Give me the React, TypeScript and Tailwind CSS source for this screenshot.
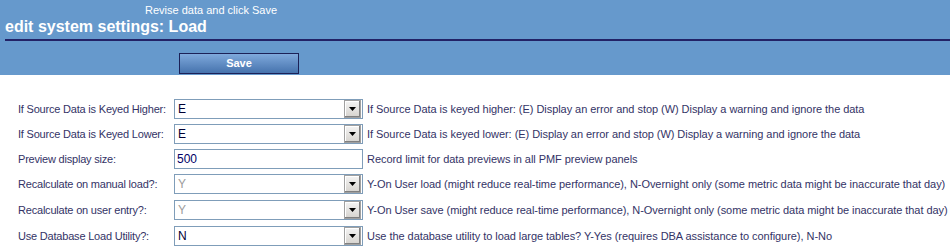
const rows = [
  {
    label: 'If Source Data is Keyed Higher:',
    kind: 'select',
    value: 'E',
    disabled: false,
    help: 'If Source Data is keyed higher: (E) Display an error and stop (W) Display a warning and ignore the data',
  },
  {
    label: 'If Source Data is Keyed Lower:',
    kind: 'select',
    value: 'E',
    disabled: false,
    help: 'If Source Data is keyed lower: (E) Display an error and stop (W) Display a warning and ignore the data',
  },
  {
    label: 'Preview display size:',
    kind: 'input',
    value: '500',
    disabled: false,
    help: 'Record limit for data previews in all PMF preview panels',
  },
  {
    label: 'Recalculate on manual load?:',
    kind: 'select',
    value: 'Y',
    disabled: true,
    help: 'Y-On User load (might reduce real-time performance), N-Overnight only (some metric data might be inaccurate that day)',
  },
  {
    label: 'Recalculate on user entry?:',
    kind: 'select',
    value: 'Y',
    disabled: true,
    help: 'Y-On User save (might reduce real-time performance), N-Overnight only (some metric data might be inaccurate that day)',
  },
  {
    label: 'Use Database Load Utility?:',
    kind: 'select',
    value: 'N',
    disabled: false,
    help: 'Use the database utility to load large tables? Y-Yes (requires DBA assistance to configure), N-No',
  },
];

function DropButton() {
  return (
    <div className="flex h-[18px] w-[17px] shrink-0 items-center justify-center border border-[#a0a0a0] bg-gradient-to-b from-[#f4f4f4] to-[#d6d3ce] shadow-[inset_-1px_-1px_0_#808080,inset_1px_1px_0_#ffffff]">
      <svg width="7" height="4" viewBox="0 0 7 4">
        <path d="M0 0H7L3.5 4Z" fill="#000" />
      </svg>
    </div>
  );
}

function Field({ kind, value, disabled }: { kind: string; value: string; disabled: boolean }) {
  if (kind === 'input') {
    return (
      <div className="flex h-[20px] w-[189px] shrink-0 items-center border border-[#7f9db9] bg-white pl-[2px] text-[12px] text-[#000066]">
        {value}
      </div>
    );
  }
  return (
    <div className="flex h-[20px] w-[189px] shrink-0 items-center justify-between border border-[#7f9db9] bg-white pl-[3px] pr-[1px]">
      <span className={disabled ? 'text-[12px] text-[#9c9c9c]' : 'text-[12px] text-[#000033]'}>{value}</span>
      <DropButton />
    </div>
  );
}

export default function App() {
  return (
    <div className="h-[248px] w-[950px] overflow-hidden bg-white font-['Liberation_Sans',Arial,sans-serif]">
      <div className="h-[75px] bg-[#6699cc]">
        <div className="pl-[145px] pt-[3px] text-[11px] leading-[14px] text-white">Revise data and click Save</div>
        <div className="ml-[5px] border-b-2 border-[#222266] pb-[2px] text-[16px] font-bold leading-[20px] text-white">
          edit system settings: Load
        </div>
        <div className="pl-[179px] pt-[9px]">
          <button className="h-[21px] w-[120px] border border-[#1c2157] bg-gradient-to-b from-[#7fa9dc] to-[#4673ad] text-[11px] font-bold text-white">
            Save
          </button>
        </div>
      </div>
      <div className="flex flex-col pl-[18px] pt-[24px]">
        {rows.map((row, key) => {
          return (
            <div
              key={key}
              className={key < 3 ? 'flex h-[25px] items-start' : 'flex h-[26px] items-start'}
            >
              <div className="flex h-[20px] w-[156px] shrink-0 items-center whitespace-nowrap text-[11px] tracking-[-0.2px] text-[#333366]">
                {row.label}
              </div>
              <Field kind={row.kind} value={row.value} disabled={row.disabled} />
              <div className="flex h-[20px] items-center whitespace-nowrap pl-[4px] text-[11px] tracking-[-0.05px] text-[#333366]">
                {row.help}
              </div>
            </div>
          );
        })}
      </div>
    </div>
  );
}
